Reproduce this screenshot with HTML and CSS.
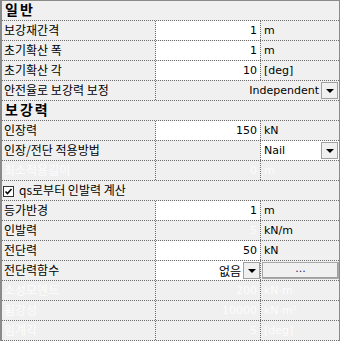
FILE: index.html
```html
<!DOCTYPE html>
<html>
<head>
<meta charset="utf-8">
<link rel="stylesheet" href="styles.css">
</head>
<body>
<div class="grid">
  <div class="row section"><span class="sec-text">일반</span></div>
  <div class="row"><div class="label">보강재간격</div><div class="val edit">1</div><div class="unit">m</div></div>
  <div class="row"><div class="label">초기확산 폭</div><div class="val edit">1</div><div class="unit">m</div></div>
  <div class="row"><div class="label">초기확산 각</div><div class="val edit">10</div><div class="unit">[deg]</div></div>
  <div class="row"><div class="label">안전율로 보강력 보정</div><div class="combo wide"><span class="combo-text">Independent</span><span class="dd"><span class="tri"></span></span></div></div>
  <div class="row section"><span class="sec-text">보강력</span></div>
  <div class="row"><div class="label">인장력</div><div class="val edit">150</div><div class="unit">kN</div></div>
  <div class="row"><div class="label">인장/전단 적용방법</div><div class="val"></div><div class="unit edit combo-left"><span class="combo-text">Nail</span><span class="dd"><span class="tri"></span></span></div></div>
  <div class="row dis"><div class="label">최소적용길이</div><div class="val">0</div><div class="unit">m</div></div>
  <div class="row full"><span class="chk"><svg width="11" height="11" viewBox="0 0 11 11"><rect x="0.5" y="0.5" width="10" height="10" fill="#fff" stroke="#333"/><path d="M2.5 5.5 L4.5 7.5 L8.5 3" fill="none" stroke="#000" stroke-width="1.6"/></svg></span><span class="chk-text">qs로부터 인발력 계산</span></div>
  <div class="row"><div class="label">등가반경</div><div class="val edit">1</div><div class="unit">m</div></div>
  <div class="row"><div class="label">인발력</div><div class="val dtext">5</div><div class="unit">kN/m</div></div>
  <div class="row"><div class="label">전단력</div><div class="val edit">50</div><div class="unit">kN</div></div>
  <div class="row"><div class="label">전단력함수</div><div class="val edit combo-right"><span class="combo-text kr">없음</span><span class="dd"><span class="tri"></span></span></div><div class="unit btn-cell"><span class="btn">...</span></div></div>
  <div class="row dis"><div class="label">소성모멘트</div><div class="val">200</div><div class="unit">kN·m</div></div>
  <div class="row dis"><div class="label">휨강성</div><div class="val">10000</div><div class="unit">kN·m²</div></div>
  <div class="row dis"><div class="label">임계각</div><div class="val">5</div><div class="unit">[deg]</div></div>
</div>
</body>
</html>
```
FILE: styles.css
```css
html, body {
  margin: 0;
  padding: 0;
  background: #f0f0f0;
}
.grid {
  width: 337px;
  border-left: 2px solid #8a8a8a;
  border-right: 1px solid #8a8a8a;
  border-top: 1px solid #8a8a8a;
  background: #f0f0f0;
  font-family: "DejaVu Sans", sans-serif;
  font-size: 11px;
  color: #000;
}
.row {
  display: grid;
  grid-template-columns: 154px 105px 78px;
  height: 20px;
  box-sizing: border-box;
  border-bottom: 1px dotted #6e6e6e;
}
.row.section, .row.full {
  display: flex;
  align-items: center;
}
.row.section {
  align-items: flex-start;
}
.sec-text {
  font-family: "Noto Sans CJK KR", sans-serif;
  font-weight: bold;
  font-size: 14px;
  letter-spacing: 2px;
  padding-left: 3px;
  line-height: 16px;
}
.label, .val, .unit, .combo {
  height: 19px;
  box-sizing: border-box;
  display: flex;
  align-items: center;
  white-space: nowrap;
  overflow: hidden;
}
.label {
  font-family: "Noto Sans CJK KR", sans-serif;
  font-size: 12px;
  padding-left: 2px;
  padding-bottom: 2px;
  border-right: 1px dotted #6e6e6e;
}
.val {
  justify-content: flex-end;
  padding-right: 3px;
  border-right: 1px dotted #6e6e6e;
}
.unit {
  padding-left: 3px;
}
.edit {
  background: #fff;
  background-clip: padding-box;
}
.wide {
  grid-column: 2 / 4;
  justify-content: flex-end;
}
.combo-text {
  padding-right: 2px;
}
.kr {
  font-family: "Noto Sans CJK KR", sans-serif;
  font-size: 12px;
  padding-bottom: 1px;
}
.dd {
  width: 17px;
  height: 17px;
  box-sizing: border-box;
  border: 1px solid #a0a0a0;
  background: #f0f0f0;
  display: flex;
  align-items: center;
  justify-content: center;
  margin-right: 1px;
  flex: none;
}
.tri {
  width: 0;
  height: 0;
  border-left: 4px solid transparent;
  border-right: 4px solid transparent;
  border-top: 4px solid #000;
}
.combo-left {
  justify-content: space-between;
}
.combo-right {
  padding-right: 0;
}
.combo-right .dd {
  margin-right: 0;
}
.btn-cell {
  padding-left: 1px;
}
.btn {
  width: 77px;
  height: 17px;
  box-sizing: border-box;
  border: 1px solid #a8a8a8;
  box-shadow: inset -1px -1px 0 #a0a0a0;
  background: #f0f0f0;
  display: flex;
  align-items: center;
  justify-content: center;
  color: #1a2a6a;
  padding-bottom: 4px;
}
.chk {
  display: flex;
  margin-left: 1px;
  margin-top: 1px;
}
.chk-text {
  font-family: "Noto Sans CJK KR", sans-serif;
  font-size: 12px;
  padding-left: 5px;
  padding-bottom: 2px;
}
.dis .label, .dis .val, .dis .unit, .dtext {
  color: #fcfcfc;
}
```
